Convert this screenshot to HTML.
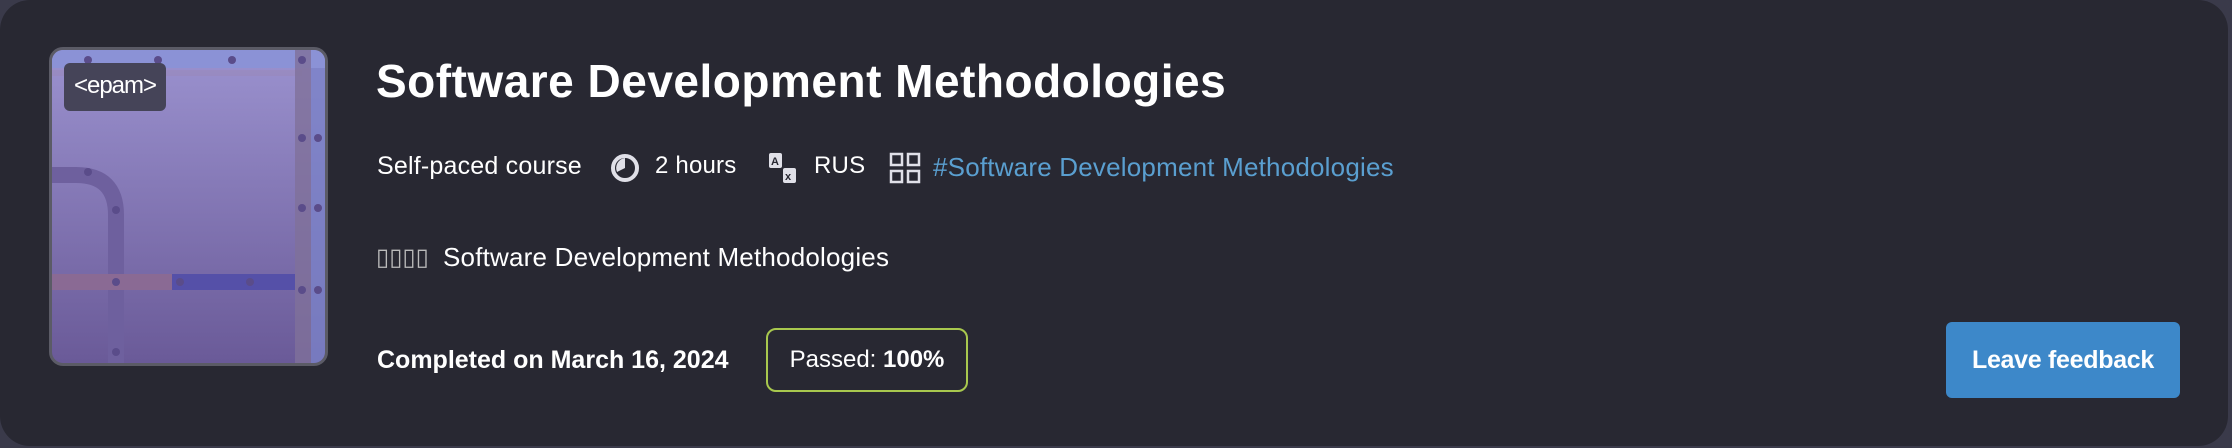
<!DOCTYPE html>
<html><head><meta charset="utf-8"><style>
*{margin:0;padding:0;box-sizing:border-box}
body{width:2232px;height:448px;background:#3a3a4a;font-family:"Liberation Sans",sans-serif;color:#fff;overflow:hidden;position:relative}
.card{position:absolute;left:0;top:0;width:2228px;height:446px;background:#282832;border-radius:30px}
.img{position:absolute;left:49px;top:47px;width:279px;height:319px;border:3px solid #5b5b66;border-radius:14px;overflow:hidden;background:linear-gradient(#9b92cf,#6a5a98)}
.t{position:absolute;white-space:nowrap}
.meta{font-size:25px;top:152px;letter-spacing:0.2px}
</style></head><body>
<div class="card">
<div class="img">
<svg width="279" height="319" viewBox="0 0 279 319" style="position:absolute;left:0;top:0">
<rect x="0" y="0" width="279" height="18" fill="#8b92d6"/>
<rect x="0" y="20" width="250" height="6" fill="#9a88b8" opacity=".5"/>
<rect x="243" y="0" width="16" height="319" fill="#80709a" opacity=".8"/>
<rect x="259" y="18" width="20" height="301" fill="#7a82c8" opacity=".8"/>
<path d="M0 125 H24 Q64 125 64 165 V319" stroke="#6e609e" stroke-width="16" fill="none"/>
<rect x="0" y="224" width="120" height="16" fill="#8a6a94"/>
<rect x="120" y="224" width="123" height="16" fill="#5550a8"/>
<g fill="#5a4c8a"><circle cx="36" cy="10" r="4"/><circle cx="106" cy="10" r="4"/><circle cx="180" cy="10" r="4"/><circle cx="250" cy="10" r="4"/><circle cx="36" cy="122" r="4"/><circle cx="64" cy="160" r="4"/><circle cx="64" cy="232" r="4"/><circle cx="128" cy="232" r="4"/><circle cx="198" cy="232" r="4"/><circle cx="64" cy="302" r="4"/><circle cx="250" cy="88" r="4"/><circle cx="266" cy="88" r="4"/><circle cx="250" cy="158" r="4"/><circle cx="266" cy="158" r="4"/><circle cx="250" cy="240" r="4"/><circle cx="266" cy="240" r="4"/></g>
</svg>
<div style="position:absolute;left:12px;top:13px;width:102px;height:48px;background:#454458;border-radius:6px;font-size:24px;line-height:46px;text-align:center;letter-spacing:-1px;font-family:'Liberation Sans Narrow','Liberation Sans',sans-serif">&lt;epam&gt;</div>
</div>
<div class="t" style="left:376px;top:54px;font-size:46px;font-weight:bold;letter-spacing:0.5px">Software Development Methodologies</div>
<div class="t meta" style="left:377px">Self-paced course</div>
<svg class="t" style="left:609px;top:152px" width="32" height="32" viewBox="0 0 32 32"><circle cx="16" cy="16" r="12" stroke="#e0e0e8" stroke-width="4" fill="none"/><path d="M16 16 V6 A10 10 0 0 0 8 20 Z" fill="#e0e0e8"/></svg>
<div class="t meta" style="left:655px;font-size:24px">2 hours</div>
<svg class="t" style="left:767px;top:151px" width="32" height="34" viewBox="0 0 32 34"><rect x="2" y="2" width="13" height="15" rx="2" fill="#e0e0e8"/><rect x="16" y="17" width="13" height="15" rx="2" fill="#e0e0e8"/><text x="4" y="14" font-size="11" fill="#282832" font-weight="bold">A</text><text x="18" y="29" font-size="11" fill="#282832" font-weight="bold">x</text></svg>
<div class="t meta" style="left:814px;font-size:24px">RUS</div>
<svg class="t" style="left:889px;top:152px" width="32" height="32" viewBox="0 0 32 32" fill="none" stroke="#e0e0e8" stroke-width="2.5"><rect x="2" y="2" width="11" height="11"/><rect x="19" y="2" width="11" height="11"/><rect x="2" y="19" width="11" height="11"/><rect x="19" y="19" width="11" height="11"/></svg>
<div class="t meta" style="left:933px;color:#5a9fd0;font-size:26px;letter-spacing:0.2px">#Software Development Methodologies</div>
<div class="t" style="left:376px;top:243px;font-size:24px"><span style="display:inline-block;color:#bbb;letter-spacing:0">▯▯▯▯</span></div>
<div class="t" style="left:443px;top:242px;font-size:26px;letter-spacing:0.2px">Software Development Methodologies</div>
<div class="t" style="left:377px;top:346px;font-size:25px;font-weight:bold;letter-spacing:0px">Completed on March 16, 2024</div>
<div class="t" style="left:766px;top:328px;width:202px;height:64px;border:2px solid #a8c84e;border-radius:10px;font-size:24px;line-height:60px;text-align:center">Passed: <b>100%</b></div>
<div class="t" style="left:1946px;top:322px;width:234px;height:76px;background:#3d88c9;border-radius:6px;font-size:25px;font-weight:bold;line-height:76px;text-align:center;letter-spacing:-0.3px">Leave feedback</div>
</div>
</body></html>
